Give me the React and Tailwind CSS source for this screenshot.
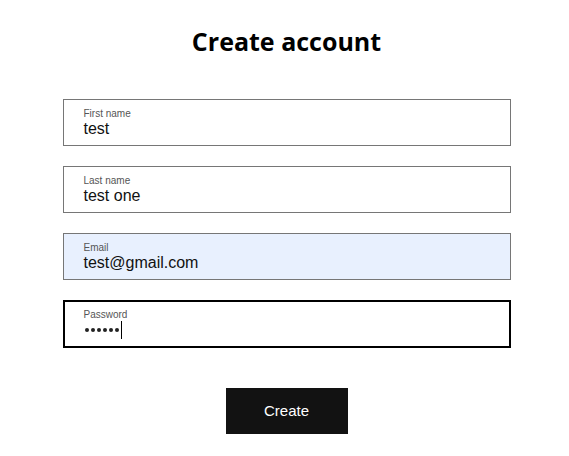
const fields = [
  { label: "First name", value: "test" },
  { label: "Last name", value: "test one" },
  { label: "Email", value: "test@gmail.com", autofill: true },
  { label: "Password", value: "", focused: true },
];

function Field({ label, value, autofill, focused }) {
  const box = focused
    ? "border-2 border-black bg-white pl-[19px] pt-[7px] h-[48px]"
    : autofill
      ? "border border-[#767676] bg-[#e8f0fe] pl-[20px] pt-[8px] h-[47px]"
      : "border border-[#767676] bg-white pl-[20px] pt-[8px] h-[47px]";
  return (
    <div className={`w-[448px] ${box}`}>
      <div className="text-[10px] leading-[11px] text-[#555]">{label}</div>
      <div className="flex h-[19px] items-center text-[16px] leading-[19px] text-[#111]">
        {focused ? (
          <>
            <span className="flex items-center gap-[2px] pl-[1px]">
              {[0, 1, 2, 3, 4, 5].map((i) => (
                <span key={i} className="h-[4px] w-[4px] rounded-full bg-[#222]" />
              ))}
            </span>
            <span className="ml-[2px] inline-block h-[18px] w-px bg-black" />
          </>
        ) : (
          value
        )}
      </div>
    </div>
  );
}

export default function App() {
  return (
    <div className="min-h-[456px] bg-white pl-[4px] font-['Liberation_Sans',Arial,sans-serif]">
      <div className="flex flex-col items-center pt-[25px]">
        <h1 className="font-['Open_Sans',sans-serif] text-[25px] font-bold leading-[32px] text-black">
          Create account
        </h1>
        <div className="mt-[42px] flex flex-col gap-[20px]">
          {fields.map((f) => (
            <Field key={f.label} {...f} />
          ))}
        </div>
        <button className="mt-[40px] h-[46px] w-[122px] bg-[#121212] text-[15px] text-white">
          Create
        </button>
      </div>
    </div>
  );
}
